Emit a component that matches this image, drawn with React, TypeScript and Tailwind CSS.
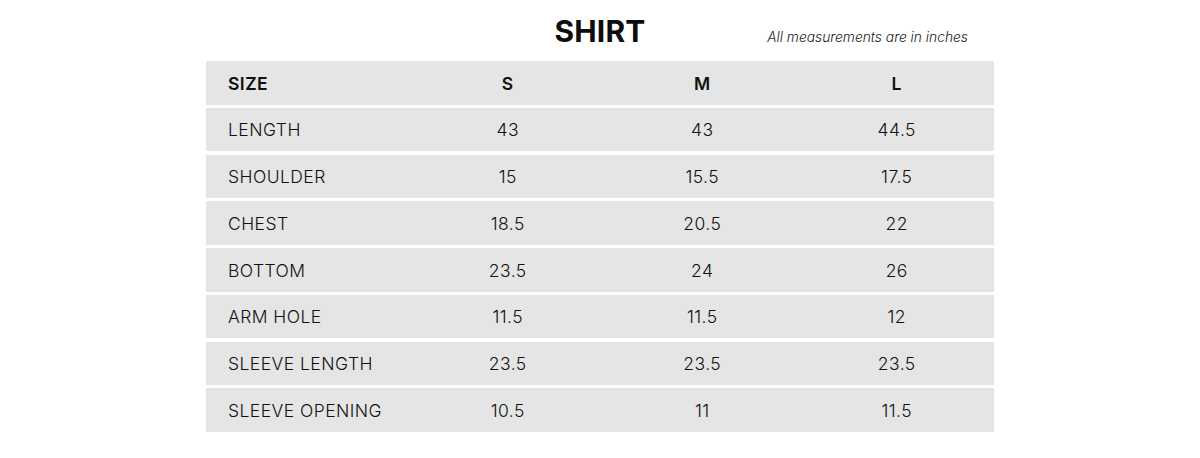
import React from "react";

const rows: [string, string, string, string][] = [
  ["LENGTH", "43", "43", "44.5"],
  ["SHOULDER", "15", "15.5", "17.5"],
  ["CHEST", "18.5", "20.5", "22"],
  ["BOTTOM", "23.5", "24", "26"],
  ["ARM HOLE", "11.5", "11.5", "12"],
  ["SLEEVE LENGTH", "23.5", "23.5", "23.5"],
  ["SLEEVE OPENING", "10.5", "11", "11.5"],
];

export default function App() {
  return (
    <div
      className="w-[1200px] h-[458px] bg-white text-[#111111]"
      style={{ fontFamily: "Inter, 'Liberation Sans', sans-serif" }}
    >
      <div className="w-[788px] ml-[206px] pt-[16px]">
        <div className="grid grid-cols-[1fr_auto_1fr] items-baseline mb-[14px]">
          <div />
          <h1 className="text-[30px] leading-[30px] font-bold tracking-[0.2px] text-[#0d0d0d]">SHIRT</h1>
          <p className="text-[13.8px] leading-[20px] italic font-light text-[#1a1a1a] text-right pr-[26px]">
            All measurements are in inches
          </p>
        </div>
        <div className="flex flex-col gap-[3.25px]">
          <div className="grid grid-cols-[204.5px_1fr_1fr_1fr] h-[43.5px] items-center bg-[#e5e5e5] text-[17.5px] font-semibold tracking-[0.45px] pt-[2px]">
            <div className="pl-[22px]">SIZE</div>
            <div className="text-center">S</div>
            <div className="text-center">M</div>
            <div className="text-center">L</div>
          </div>
          {rows.map((r) => (
            <div
              key={r[0]}
              className="grid grid-cols-[204.5px_1fr_1fr_1fr] h-[43.5px] items-center bg-[#e5e5e5] text-[17.5px] font-light tracking-[0.45px] pt-[2px]"
            >
              <div className="pl-[22px] whitespace-nowrap">{r[0]}</div>
              <div className="text-center">{r[1]}</div>
              <div className="text-center">{r[2]}</div>
              <div className="text-center">{r[3]}</div>
            </div>
          ))}
        </div>
      </div>
    </div>
  );
}
